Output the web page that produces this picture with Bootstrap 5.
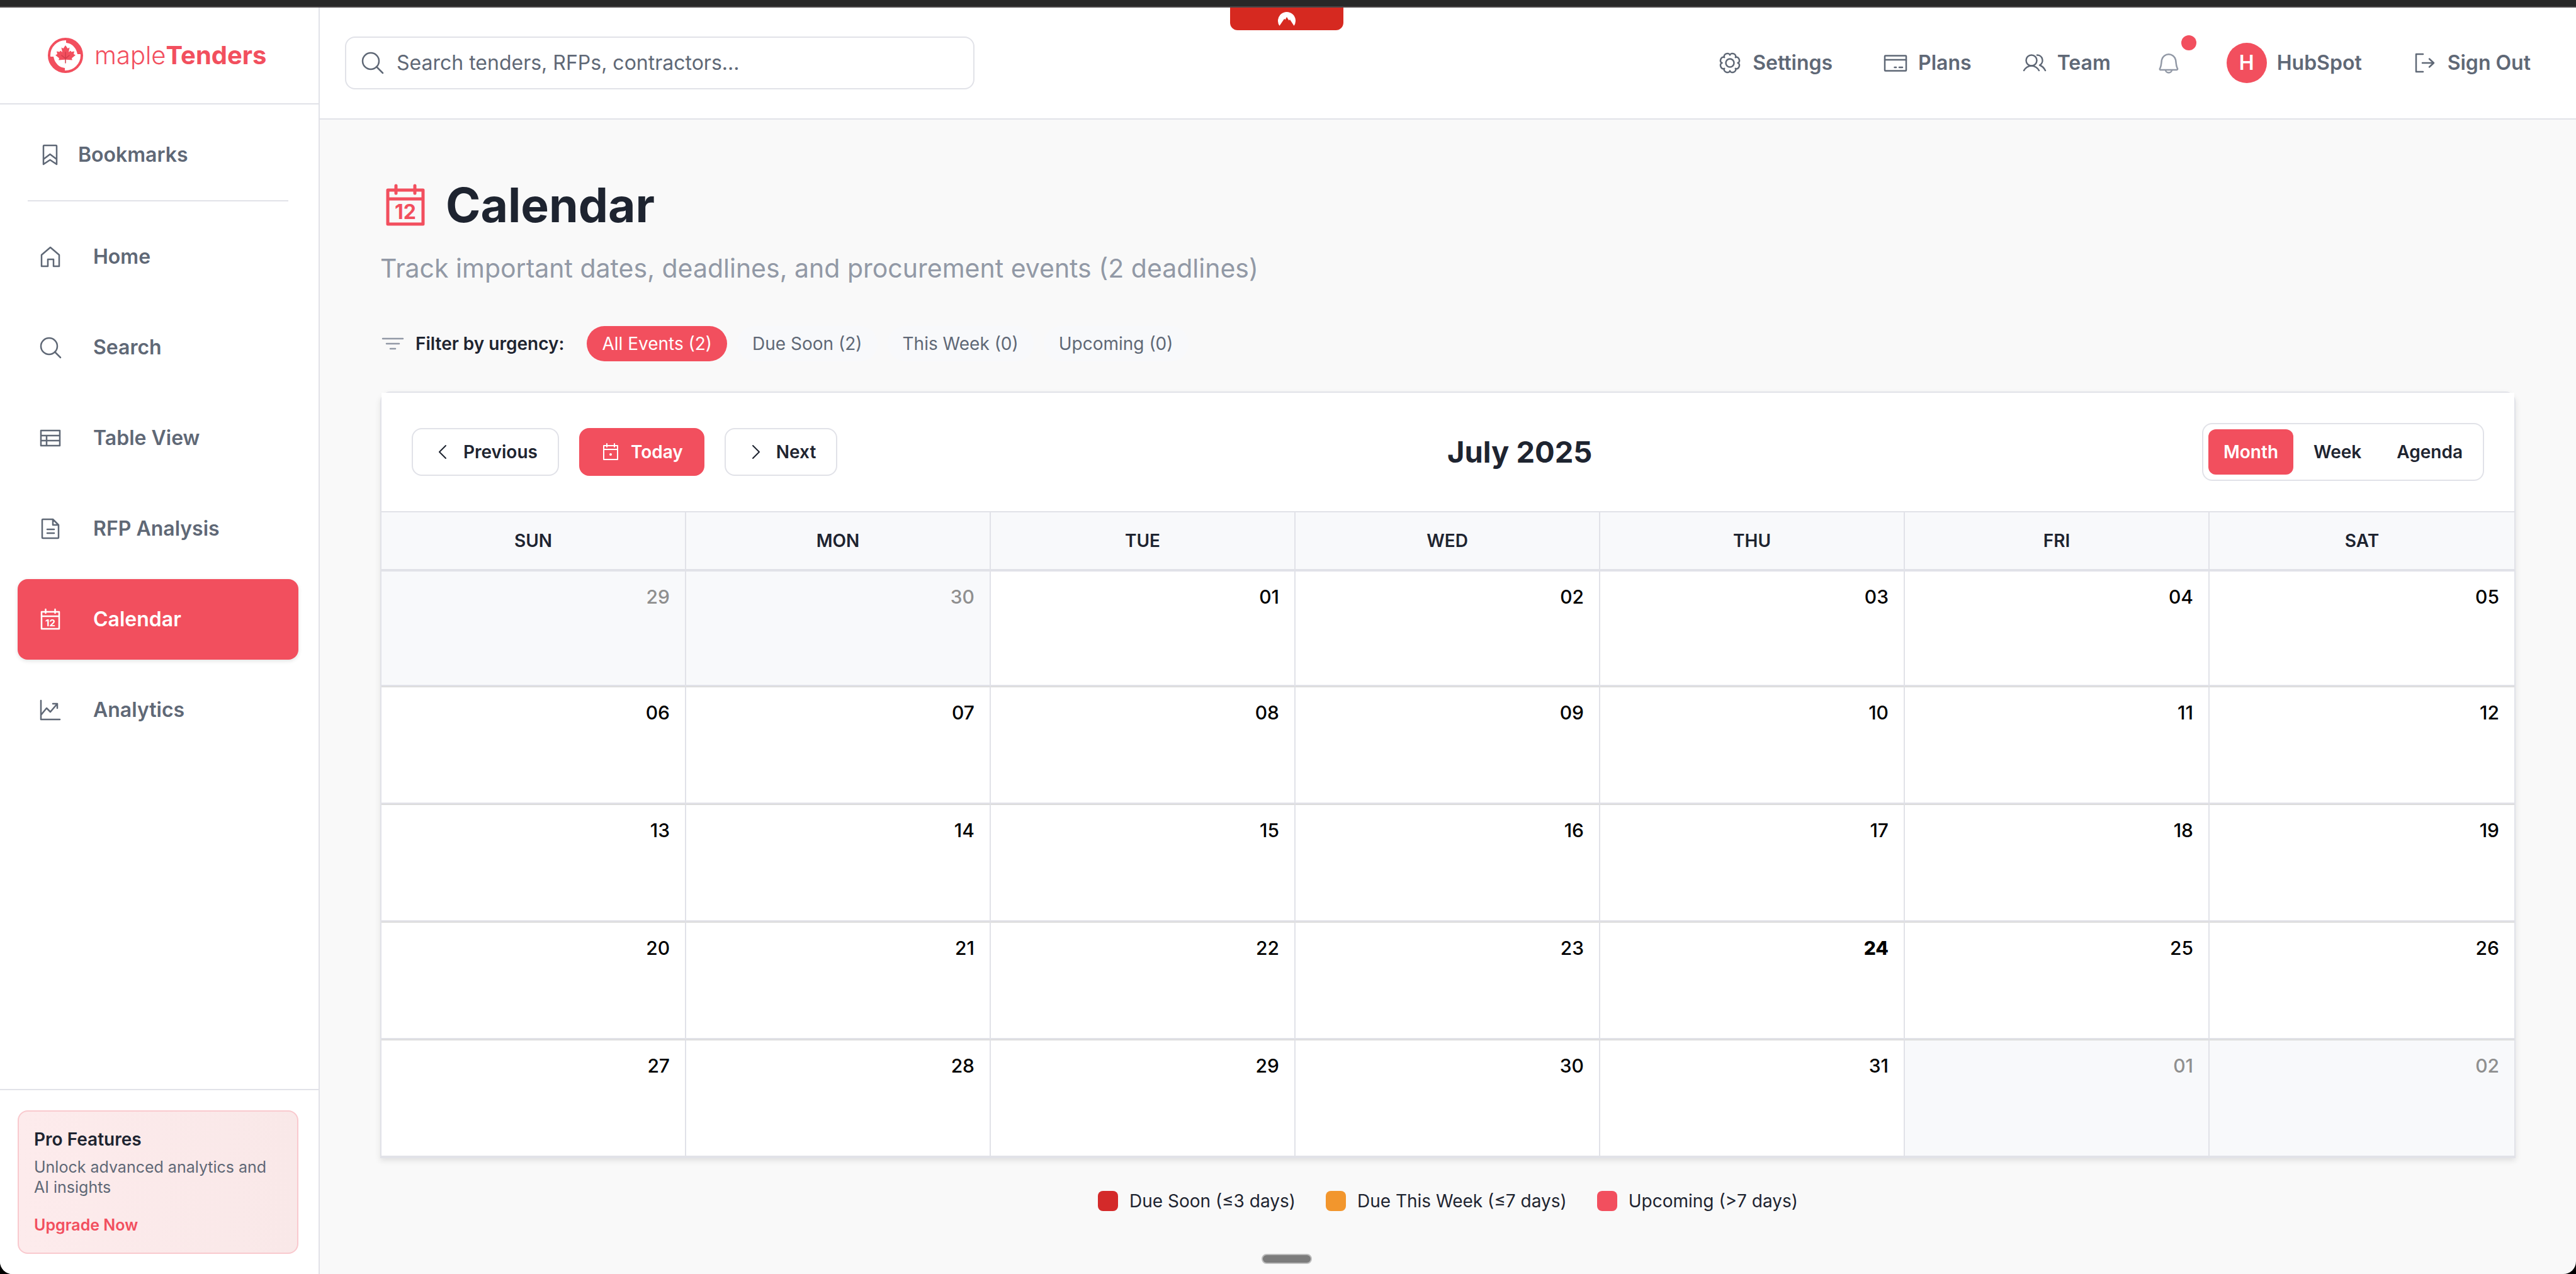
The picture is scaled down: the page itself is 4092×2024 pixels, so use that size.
<!DOCTYPE html>
<html lang="en">
<head>
<meta charset="utf-8">
<meta name="viewport" content="width=device-width, initial-scale=1">
<title>mapleTenders – Calendar</title>
<link href="https://cdn.jsdelivr.net/npm/bootstrap@5.3.0/dist/css/bootstrap.min.css" rel="stylesheet">
<style>
:root{--mt-red:#f24f5e;--mt-line:#e1e2e8;--mt-ink:#1e2430;--mt-slate:#5f6876;--mt-mute:#9299a6;--mt-tint:#f8f9fb}
body{font-family:Inter,"Open Sans",sans-serif;font-size:28px;line-height:40px;color:var(--mt-ink);background:#000;min-height:100vh}
svg{display:block;flex:none;fill:none;stroke:currentColor;stroke-width:2.5;stroke-linecap:round;stroke-linejoin:round}
a{text-decoration:none;color:inherit}
.ic-s{width:32px;height:32px;stroke-width:2}.ic-m{width:40px;height:40px}.ic-l{width:80px;height:80px}
.ink-red{color:var(--mt-red)}.ink-mute{color:var(--mt-mute)}
.top-strip{height:12px;background:#282828;border-bottom:2px solid #4a4648}
.vpn-tab{position:absolute;top:12px;left:50%;margin-left:-92px;width:180px;height:36px;background:#d62920;border-radius:0 0 12px 12px;z-index:5}
.vpn-tab svg{width:28px;height:24px;fill:#fff;stroke:none}
.shell{background:#f9f9f9;border-radius:0 0 20px 20px;overflow:hidden}
.side{width:508px;background:#fff;border-right:2px solid var(--mt-line)}
.brand{height:154px;padding:0 76px;border-bottom:2px solid var(--mt-line);color:var(--mt-red);font-size:40px;gap:18px;font-weight:300}
.brand svg{width:56px;height:56px}
.brand b{font-weight:700}
.side-nav{padding:16px 32px 0 28px}
.side-link{height:128px;padding:0 32px;gap:48px;border-radius:16px;color:var(--mt-slate);font-size:32px;font-weight:600}
.side-link.first{gap:24px}
.side-link.active{background:var(--mt-red);color:#fff;box-shadow:0 2px 6px rgba(0,0,0,.12)}
.side-rule{height:2px;background:var(--mt-line);margin:8px 16px 24px}
.side-foot{border-top:2px solid var(--mt-line);padding:32px 32px 32px 28px}
.promo{border:2px solid #f9c9ce;border-radius:16px;padding:24px;background:linear-gradient(90deg,#fdebec,#f9e8e8)}
.promo h2{font-size:28px;line-height:40px;font-weight:600;margin:0 0 8px}
.promo p{font-size:25px;line-height:32px;color:var(--mt-slate);margin:0 0 24px}
.promo button{font-size:25px;line-height:40px;font-weight:600;color:var(--mt-red);border:0;background:none;padding:0}
.bar{height:178px;padding:0 72px 0 40px;background:#fff;border-bottom:2px solid var(--mt-line);color:var(--mt-slate);font-size:32px;font-weight:600}
.find{width:1000px;height:84px;border:2px solid var(--mt-line);border-radius:16px;padding:0 22px;gap:18px}
.find input{border:0;outline:0;font-size:32px;color:var(--mt-slate);background:none;padding:0}
.find input::placeholder{color:var(--mt-slate);opacity:1}
.bar-links{gap:80px}
.bell{color:var(--mt-mute);margin:0 -8px}
.bell-dot{position:absolute;left:40px;top:-24px;width:24px;height:24px;border-radius:50%;background:var(--mt-red)}
.ava{width:64px;height:64px;border-radius:50%;background:var(--mt-red);color:#fff}
.page{padding:96px}
.page h1{font-size:75px;line-height:80px;font-weight:700;margin:0}
.sub{font-size:41px;line-height:56px;color:var(--mt-mute);margin:32px 0 64px}
.chips{gap:16px}
.chips-label{gap:16px;font-weight:600;margin-right:20px}
.chip{height:56px;padding:0 24px;border:0;border-radius:28px;background:var(--mt-tint);color:var(--mt-slate)}
.chip.on{background:var(--mt-red);color:#fff}
.cal{margin-top:48px;border:2px solid var(--mt-line);border-radius:16px 16px 0 0;box-shadow:0 4px 10px rgba(0,0,0,.1)}
.cal-bar{background:#fff;padding:48px;border-bottom:2px solid var(--mt-line)}
.cal-bar h2{font-size:47px;line-height:56px;font-weight:700;margin:0}
.steps{gap:32px}
.step{height:76px;padding:0 32px;gap:16px;border:2px solid var(--mt-line);border-radius:16px;background:#fff;color:var(--mt-ink);font-weight:600}
.step.on{background:var(--mt-red);border-color:var(--mt-red);color:#fff}
.seg{border:2px solid var(--mt-line);border-radius:16px;padding:8px;gap:8px}
.seg button{height:72px;padding:0 24px;border:0;border-radius:12px;background:none;color:var(--mt-ink);font-weight:600}
.seg .on{background:var(--mt-red);color:#fff}
.month{width:100%;height:1024px;table-layout:fixed;border-collapse:separate;border-spacing:0;background:#fff}
.month th{height:94px;background:var(--mt-tint);text-align:center;font-weight:600;border-right:2px solid var(--mt-line);border-bottom:4px solid var(--mt-line)}
.month td{padding:16px 24px 0;text-align:right;vertical-align:top;font-size:30px;line-height:48px;font-weight:500;color:#000;border-right:2px solid var(--mt-line);border-bottom:2px solid var(--mt-line)}
.month tr+tr td{border-top:2px solid #ddd}
.month th:last-child,.month td:last-child{border-right:0}
.month .off{background:var(--mt-tint);color:#8f8f8f}
.month .now{font-weight:800}
.legend{gap:48px;margin-top:48px}
.legend span{gap:18px}
.legend i{width:32px;height:32px;border-radius:8px}
.sw-a{background:#d42a2a}.sw-b{background:#f2962d}.sw-c{background:var(--mt-red)}
.grab{position:fixed;bottom:16px;left:50%;margin-left:-42px;width:80px;height:16px;border:2px solid #bdbdbd;border-radius:8px;background:#7c7c7c}
</style>
<script src="https://cdn.jsdelivr.net/npm/bootstrap@5.3.0/dist/js/bootstrap.bundle.min.js"></script>
</head>
<body class="d-flex flex-column">
<div class="top-strip"></div>
<div class="vpn-tab d-flex justify-content-center align-items-center"><svg viewBox="0 0 28 24"><path d="M2.500 23A14 14 0 1 1 25.500 23L19 13l-1.500 1.500L14 9l-2.500 4.500-.5-1-1-.5z"/></svg></div>
<div class="shell d-flex flex-grow-1">
  <aside class="side d-flex flex-column flex-shrink-0">
    <a href="#" class="brand d-flex align-items-center">
      <svg viewBox="0 0 56 56"><circle cx="28" cy="28" r="26" stroke-width="4"/><path stroke="none" fill="currentColor" d="M29 2v6c7 1 11 4 13 7 3 3 4 7 5 11h7A26 26 0 0 0 29 2zM27 54v-6c-7-1-11-4-13-7-3-3-4-7-5-11H2a26 26 0 0 0 25 24z"/><path stroke="none" fill="currentColor" d="M28 12l3.500 5 3-1.500L33 23l3-2.500 1.500 2 4.500-1-1 4.500 3 1.500-6 5 .8 3-9.800-.8h-2l-9.800.8.8-3-6-5 3-1.500-1-4.500 4.500 1 1.500-2 3 2.500-1.500-7.500 3 1.500z"/><path stroke="#d23d4c" stroke-width="1.500" d="M28 23v17M22 28l6 5 6-5"/></svg>
      <span>maple<b>Tenders</b></span>
    </a>
    <nav class="side-nav">
      <a href="#" class="side-link first d-flex align-items-center"><svg class="ic-m" viewBox="0 0 40 40"><path d="M9 35V6q0-1 1-1h19q1 0 1 1v29l-10.500-7zM9 27l10.500-8L30 27"/></svg><span>Bookmarks</span></a>
      <div class="side-rule"></div>
      <div class="d-flex flex-column gap-3">
      <a href="#" class="side-link d-flex align-items-center"><svg class="ic-m" viewBox="0 0 40 40"><path d="M6 35V17L20 5l14 12v18h-9V24h-9v11z"/></svg><span>Home</span></a>
      <a href="#" class="side-link d-flex align-items-center"><svg class="ic-m" viewBox="0 0 40 40"><circle cx="18" cy="18" r="13"/><path d="M27 27l9 9"/></svg><span>Search</span></a>
      <a href="#" class="side-link d-flex align-items-center"><svg class="ic-m" viewBox="0 0 40 40"><path d="M5 8h30v24H5zM5 16h30M5 24h30M14 16v16"/></svg><span>Table View</span></a>
      <a href="#" class="side-link d-flex align-items-center"><svg class="ic-m" viewBox="0 0 40 40"><path d="M7 6q0-1 1-1h16l9 9v20q0 1-1 1H8q-1 0-1-1zM24 5v9h9M15 21h11M15 27h11"/></svg><span>RFP Analysis</span></a>
      <a href="#" class="side-link active d-flex align-items-center" aria-current="page"><svg class="ic-m" viewBox="0 0 40 40"><path d="M6 8h28v27H6zM6 15h28M12.500 4v6M27.500 4v6"/><text x="20" y="31" text-anchor="middle" font-size="15" font-weight="700" fill="currentColor" stroke="none">12</text></svg><span>Calendar</span></a>
      <a href="#" class="side-link d-flex align-items-center"><svg class="ic-m" viewBox="0 0 40 40"><path d="M5 5v30h30M5 28l9-11 6 6L31 10M24 10h7v7"/></svg><span>Analytics</span></a>
      </div>
    </nav>
    <div class="side-foot mt-auto">
      <div class="promo"><h2>Pro Features</h2><p>Unlock advanced analytics and AI insights</p><button type="button" class="d-block">Upgrade Now</button></div>
    </div>
  </aside>
  <div class="flex-grow-1">
    <header class="bar d-flex align-items-center justify-content-between">
      <form class="find d-flex align-items-center" role="search"><svg class="ic-m" viewBox="0 0 40 40"><circle cx="17" cy="17" r="13"/><path d="M26 26l10 10"/></svg><input class="flex-grow-1" type="search" aria-label="Search" placeholder="Search tenders, RFPs, contractors..."></form>
      <nav class="bar-links d-flex align-items-center">
        <a href="#" class="d-flex align-items-center gap-3"><svg class="ic-m" viewBox="0 0 40 40"><path d="M20 7.500C21.600 2.100 31.600 6.200 28.800 11.200 33.800 8.400 37.900 18.400 32.500 20 37.900 21.600 33.800 31.600 28.800 28.800 31.600 33.800 21.600 37.900 20 32.500 18.400 37.900 8.400 33.800 11.200 28.800 6.200 31.600 2.100 21.600 7.500 20 2.100 18.400 6.200 8.400 11.200 11.200 8.400 6.200 18.400 2.100 20 7.500z"/><circle cx="20" cy="20" r="6.500"/></svg><span>Settings</span></a>
        <a href="#" class="d-flex align-items-center gap-3"><svg class="ic-m" viewBox="0 0 40 40"><rect x="3" y="8.500" width="34" height="24" rx="1"/><path d="M3 15h34M18.500 27h2.500M26 27h5"/></svg><span>Plans</span></a>
        <a href="#" class="d-flex align-items-center gap-3"><svg class="ic-m" viewBox="0 0 40 40"><circle cx="15" cy="16" r="8.500"/><path d="M3 32c2-4 7-7.500 12-7.500S25 28 27 32M24 7.500a8.500 8.500 0 0 1 4 16c4 1.500 7 4.500 9 8.500"/></svg><span>Team</span></a>
        <a href="#" class="bell position-relative" aria-label="Notifications"><svg class="ic-m" viewBox="0 0 40 40"><path d="M6.500 31Q5 30 6.500 28C8.500 24 8 20 9 15a11.300 11.300 0 0 1 22 0c1 5 .5 9 2.500 13q1.500 2-.5 3zM15 31a5 4.500 0 0 0 10 0"/></svg><span class="bell-dot"></span></a>
        <a href="#" class="d-flex align-items-center gap-3"><span class="ava d-flex align-items-center justify-content-center">H</span><span>HubSpot</span></a>
        <a href="#" class="d-flex align-items-center gap-3"><svg class="ic-m" viewBox="0 0 40 40"><path d="M17 6H6v28h11M16 20h18M27 13.500l7 6.500-7 6.500"/></svg><span>Sign Out</span></a>
      </nav>
    </header>
    <main class="page">
      <div class="d-flex align-items-center gap-4"><svg class="ic-l ink-red" viewBox="0 0 40 40"><path d="M6 8h28v27H6zM6 15h28M12.500 4.500v6M27.500 4.500v6"/><text x="20" y="31" text-anchor="middle" font-size="16" font-weight="700" fill="currentColor" stroke="none">12</text></svg><h1>Calendar</h1></div>
      <p class="sub">Track important dates, deadlines, and procurement events (2 deadlines)</p>
      <div class="chips d-flex align-items-center">
        <div class="chips-label d-flex align-items-center"><svg class="ic-m ink-mute" viewBox="0 0 40 40"><path d="M4 12h32M10 20h20M16 28h8"/></svg><span>Filter by urgency:</span></div>
        <button type="button" class="chip on">All Events (2)</button>
        <button type="button" class="chip">Due Soon (2)</button>
        <button type="button" class="chip">This Week (0)</button>
        <button type="button" class="chip">Upcoming (0)</button>
      </div>
      <section class="cal">
        <div class="cal-bar d-flex align-items-center justify-content-between">
          <div class="steps d-flex align-items-center">
            <button type="button" class="step d-flex align-items-center"><svg class="ic-s" viewBox="0 0 32 32"><path d="M20 6L10 16l10 10"/></svg><span>Previous</span></button>
            <button type="button" class="step on d-flex align-items-center"><svg class="ic-s" viewBox="0 0 32 32"><path d="M5 6h22v22H5zM5 12h22M10 3v5M22 3v5"/><circle cx="16" cy="20" r="1"/></svg><span>Today</span></button>
            <button type="button" class="step d-flex align-items-center"><svg class="ic-s" viewBox="0 0 32 32"><path d="M11 6l10 10-10 10"/></svg><span>Next</span></button>
          </div>
          <h2>July 2025</h2>
          <div class="seg d-flex">
            <button type="button" class="on">Month</button><button type="button">Week</button><button type="button">Agenda</button>
          </div>
        </div>
        <table class="month">
          <thead><tr><th>SUN</th><th>MON</th><th>TUE</th><th>WED</th><th>THU</th><th>FRI</th><th>SAT</th></tr></thead>
          <tbody>
            <tr><td class="off">29</td><td class="off">30</td><td>01</td><td>02</td><td>03</td><td>04</td><td>05</td></tr>
            <tr><td>06</td><td>07</td><td>08</td><td>09</td><td>10</td><td>11</td><td>12</td></tr>
            <tr><td>13</td><td>14</td><td>15</td><td>16</td><td>17</td><td>18</td><td>19</td></tr>
            <tr><td>20</td><td>21</td><td>22</td><td>23</td><td class="now">24</td><td>25</td><td>26</td></tr>
            <tr><td>27</td><td>28</td><td>29</td><td>30</td><td>31</td><td class="off">01</td><td class="off">02</td></tr>
          </tbody>
        </table>
      </section>
      <div class="legend d-flex justify-content-center">
        <span class="d-flex align-items-center"><i class="sw-a"></i>Due Soon (≤3 days)</span>
        <span class="d-flex align-items-center"><i class="sw-b"></i>Due This Week (≤7 days)</span>
        <span class="d-flex align-items-center"><i class="sw-c"></i>Upcoming (&gt;7 days)</span>
      </div>
    </main>
  </div>
</div>
<div class="grab"></div>
</body>
</html>
